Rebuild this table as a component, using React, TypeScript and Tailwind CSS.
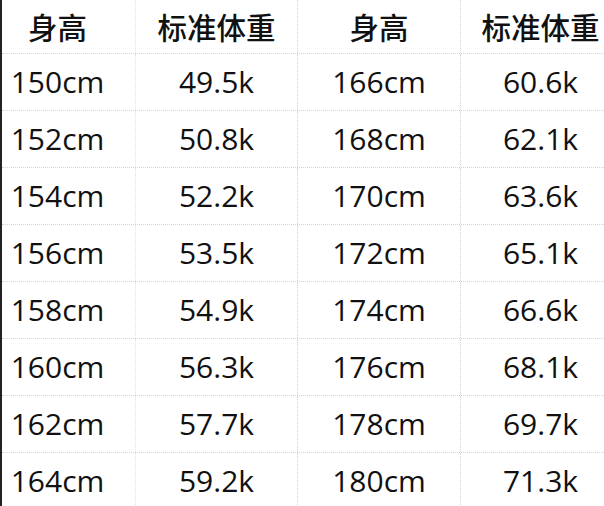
const rows: [string, string, string, string][] = [
  ["150cm", "49.5k", "166cm", "60.6k"],
  ["152cm", "50.8k", "168cm", "62.1k"],
  ["154cm", "52.2k", "170cm", "63.6k"],
  ["156cm", "53.5k", "172cm", "65.1k"],
  ["158cm", "54.9k", "174cm", "66.6k"],
  ["160cm", "56.3k", "176cm", "68.1k"],
  ["162cm", "57.7k", "178cm", "69.7k"],
  ["164cm", "59.2k", "180cm", "71.3k"],
];

const cjk = { fontFamily: '"Noto Sans CJK SC", "Noto Sans", sans-serif' };
const latin = { fontFamily: '"Open Sans", "Noto Sans", sans-serif' };

export default function App() {
  return (
    <div className="h-[506px] w-[604px] overflow-hidden border-l-2 border-[#222] bg-white text-[#111]">
      {/* Header */}
      <div
        className="flex h-[54px] items-center border-b border-dotted border-[#d4d4d4] text-[29.5px] font-medium leading-none"
        style={cjk}
      >
        <div className="flex h-full w-[134px] items-center justify-center border-r border-dotted border-[#e2e2e2] pr-[22px]">
          身高
        </div>
        <div className="flex h-full w-[162px] items-center justify-center border-r border-dotted border-[#d4d4d4]">
          标准体重
        </div>
        <div className="flex h-full w-[163px] items-center justify-center border-r border-dotted border-[#d4d4d4]">
          身高
        </div>
        <div className="flex h-full flex-1 items-center justify-center pl-[16px]">
          标准体重
        </div>
      </div>

      {/* Rows */}
      {rows.map((r) => (
        <div
          key={r[0]}
          className="flex h-[57px] items-center border-b border-dotted border-[#d4d4d4] text-[30px] leading-none"
          style={latin}
        >
          <div className="flex h-full w-[134px] items-center justify-center border-r border-dotted border-[#e2e2e2] pr-[22px]">
            {r[0]}
          </div>
          <div className="flex h-full w-[162px] items-center justify-center border-r border-dotted border-[#d4d4d4]">
            {r[1]}
          </div>
          <div className="flex h-full w-[163px] items-center justify-center border-r border-dotted border-[#d4d4d4]">
            {r[2]}
          </div>
          <div className="flex h-full flex-1 items-center justify-center pl-[16px]">
            {r[3]}
          </div>
        </div>
      ))}
    </div>
  );
}
